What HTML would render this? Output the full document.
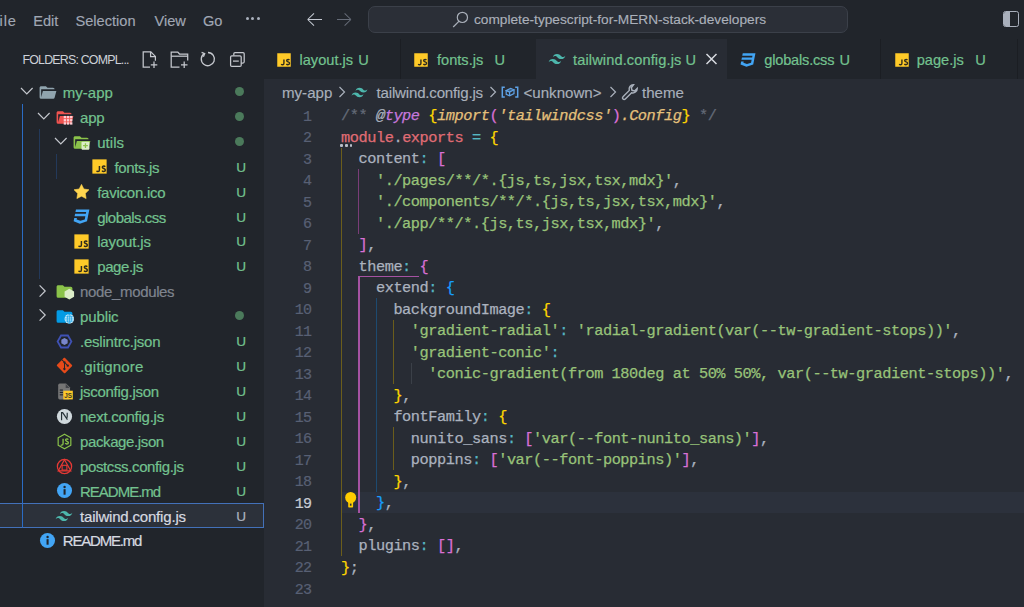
<!DOCTYPE html><html><head><meta charset="utf-8"><style>
*{margin:0;padding:0;box-sizing:border-box}
html,body{width:1024px;height:607px;overflow:hidden;background:#282c34}
body{position:relative;font-family:"Liberation Sans",sans-serif;color:#abb2bf}
.a{position:absolute;white-space:nowrap}
.menu{top:2px;height:39px;line-height:39px;font-size:14.6px;color:#a0a7b4;-webkit-text-stroke:0.15px currentColor}
.tr{-webkit-text-stroke:0.2px currentColor;font-size:15px;color:#81b88b;line-height:25px;height:25px}
.code{font-family:"Liberation Mono",monospace;font-size:15.3px;letter-spacing:-0.45px;-webkit-text-stroke:0.25px currentColor;line-height:21.5px;height:21.5px;color:#abb2bf;white-space:pre}
.ln{font-family:"Liberation Mono",monospace;font-size:15px;letter-spacing:-0.6px;-webkit-text-stroke:0.2px currentColor;line-height:21.5px;color:#495162;text-align:right;width:40px}
.tab{-webkit-text-stroke:0.2px currentColor;font-size:14.6px;line-height:40px;height:40px;color:#81b88b}
svg{position:absolute;overflow:visible}
</style></head><body>
<div class="a" style="left:0;top:0;width:1024px;height:39px;background:#21252b"></div>
<div class="a" style="left:0;top:39px;width:264px;height:568px;background:#21252b"></div>
<div class="a" style="left:264px;top:39px;width:760px;height:40px;background:#21252b"></div>
<div class="a" style="left:264px;top:79px;width:760px;height:528px;background:#282c34"></div>
<div class="a menu" style="left:-10.3px;letter-spacing:0.9px">File</div>
<div class="a menu" style="left:33.2px;letter-spacing:0px">Edit</div>
<div class="a menu" style="left:75.5px;letter-spacing:0px">Selection</div>
<div class="a menu" style="left:154.5px;letter-spacing:0px">View</div>
<div class="a menu" style="left:203px;letter-spacing:0px">Go</div>
<div class="a" style="left:245.5px;top:17.4px;width:3px;height:3px;border-radius:50%;background:#aab1bd"></div>
<div class="a" style="left:251.17px;top:17.4px;width:3px;height:3px;border-radius:50%;background:#aab1bd"></div>
<div class="a" style="left:256.84px;top:17.4px;width:3px;height:3px;border-radius:50%;background:#aab1bd"></div>
<svg style="left:305px;top:11px" width="18" height="18" viewBox="0 0 18 18"><path d="M2.7 8.5H17M2.7 8.5L9 2.3M2.7 8.5L9 14.7" stroke="#c5cad3" stroke-width="1.05" fill="none"/></svg>
<svg style="left:335px;top:11px" width="18" height="18" viewBox="0 0 18 18"><path d="M15.9 8.5H2M15.9 8.5L9.6 2.3M15.9 8.5L9.6 14.7" stroke="#666c78" stroke-width="1.05" fill="none"/></svg>
<div class="a" style="left:368px;top:6px;width:480px;height:26.5px;border-radius:7px;background:#2b2f37;border:1px solid #3b4049"></div>
<svg style="left:452px;top:10px" width="18" height="18" viewBox="0 0 18 18"><circle cx="10.4" cy="7.4" r="5.1" stroke="#a9afb9" stroke-width="1.2" fill="none"/><path d="M7.1 11.1L1.2 17" stroke="#a9afb9" stroke-width="1.25"/></svg>
<div class="a" style="left:474px;top:6.8px;line-height:26px;font-size:13.7px;color:#aab0ba;-webkit-text-stroke:0.15px currentColor">complete-typescript-for-MERN-stack-developers</div>
<div class="a" style="left:1003.2px;top:10.9px;width:16px;height:16px;border:1.5px solid #a9b0bc;border-radius:2.5px;overflow:hidden"><div class="a" style="left:0;top:0;width:6px;height:14px;background:#a9b0bc"></div></div>
<div class="a" style="left:22.5px;top:49.2px;font-size:12.4px;line-height:22px;color:#cdd1d8;letter-spacing:-0.8px">FOLDERS: COMPL...</div>
<svg style="left:141px;top:50px" width="19" height="19" viewBox="0 0 19 19" fill="none" stroke="#c5c8ce" stroke-width="1.25"><path d="M9 17.2H2.2V1.8h7.6l4.6 4.6v4.4"/><path d="M9.6 1.8v4.8h4.8"/><path d="M13 11.5v6.5M9.8 14.75h6.5"/></svg>
<svg style="left:170px;top:50px" width="20" height="19" viewBox="0 0 20 19" fill="none" stroke="#c5c8ce" stroke-width="1.25"><path d="M9.5 17.2H1.2V2h6.6l1.7 2h8.2v6.5"/><path d="M1.2 6.2h16.5"/><path d="M14.2 11.5v6.5M11 14.75h6.5"/></svg>
<svg style="left:199px;top:50px" width="18" height="18" viewBox="0 0 18 18" fill="none" stroke="#c5c8ce" stroke-width="1.3"><path d="M5.2 3.6A6.6 6.6 0 1 0 9 2.5"/><path d="M2.6 2.3l3.1 1.4-1.3 3.1"/></svg>
<svg style="left:229px;top:51px" width="17" height="17" viewBox="0 0 17 17" fill="none" stroke="#c5c8ce" stroke-width="1.25"><path d="M4.8 4.6V2.8c0-.7.5-1.2 1.2-1.2h8c.7 0 1.2.5 1.2 1.2v8c0 .7-.5 1.2-1.2 1.2h-1.8"/><rect x="1.6" y="4.8" width="10.6" height="10.6" rx="1.2"/><path d="M4 10.1h5.8"/></svg>
<div class="a" style="left:-1px;top:502.74000000000007px;width:265px;height:25px;background:#2c313a;border:1px solid #4371b9"></div>
<div class="a" style="left:22px;top:104.42px;width:1px;height:423.64000000000004px;background:#2b6cc4"></div>
<div class="a" style="left:39px;top:129.34px;width:1px;height:149.52px;background:#23395a"></div>
<div class="a" style="left:56px;top:154.26px;width:1px;height:24.92px;background:#23395a"></div>
<svg style="left:19.5px;top:78.2px" width="14" height="25" viewBox="0 0 14 25"><path d="M1 10l5.8 5.8L12.6 10" stroke="#c5c8ce" stroke-width="1.2" fill="none"/></svg>
<svg style="left:37.6px;top:82.7px" width="19" height="19" viewBox="0 0 24 24"><path fill="#90a4ae" d="M19 20H4a2 2 0 0 1-2-2V6c0-1.11.89-2 2-2h6l2 2h7a2 2 0 0 1 2 2H4v10l2.14-8h17.07l-2.28 8.5c-.23.87-1.01 1.5-1.93 1.5"/></svg>
<div class="a tr" style="left:62.8px;top:79.9px;letter-spacing:0.000px;color:#73c28f">my-app</div>
<div class="a" style="left:235px;top:86.8px;width:9px;height:9px;border-radius:50%;background:#4b7a5b"></div>
<svg style="left:36.8px;top:103.12px" width="14" height="25" viewBox="0 0 14 25"><path d="M1 10l5.8 5.8L12.6 10" stroke="#c5c8ce" stroke-width="1.2" fill="none"/></svg>
<svg style="left:54.900000000000006px;top:107.62px" width="19" height="19" viewBox="0 0 24 24"><path fill="#ef5350" d="M19 20H4a2 2 0 0 1-2-2V6c0-1.11.89-2 2-2h6l2 2h7a2 2 0 0 1 2 2H4v10l2.14-8h17.07l-2.28 8.5c-.23.87-1.01 1.5-1.93 1.5"/><g fill="#ffcdd2"><rect x="11" y="10" width="3" height="3"/><rect x="15" y="10" width="3" height="3"/><rect x="19" y="10" width="3" height="3"/><rect x="11" y="14" width="3" height="3"/><rect x="15" y="14" width="3" height="3"/><rect x="19" y="14" width="3" height="3"/><rect x="11" y="18" width="3" height="3"/><rect x="15" y="18" width="3" height="3"/><rect x="19" y="18" width="3" height="3"/></g></svg>
<div class="a tr" style="left:80.0px;top:104.82000000000001px;letter-spacing:-0.200px;color:#73c28f">app</div>
<div class="a" style="left:235px;top:111.72px;width:9px;height:9px;border-radius:50%;background:#4b7a5b"></div>
<svg style="left:54.1px;top:128.04px" width="14" height="25" viewBox="0 0 14 25"><path d="M1 10l5.8 5.8L12.6 10" stroke="#c5c8ce" stroke-width="1.2" fill="none"/></svg>
<svg style="left:72.2px;top:132.54px" width="19" height="19" viewBox="0 0 24 24"><path fill="#8bc34a" d="M19 20H4a2 2 0 0 1-2-2V6c0-1.11.89-2 2-2h6l2 2h7a2 2 0 0 1 2 2H4v10l2.14-8h17.07l-2.28 8.5c-.23.87-1.01 1.5-1.93 1.5"/><rect x="12" y="11" width="10" height="10" rx="1" fill="#dcedc8"/><path d="M17 13v6M14 16h6" stroke="#8bc34a" stroke-width="1.6"/></svg>
<div class="a tr" style="left:97.19999999999999px;top:129.74px;letter-spacing:0.050px;color:#73c28f">utils</div>
<div class="a" style="left:235px;top:136.64000000000001px;width:9px;height:9px;border-radius:50%;background:#4b7a5b"></div>
<svg style="left:89.5px;top:157.45999999999998px" width="19" height="19" viewBox="0 0 24 24"><rect x="3" y="3" width="18" height="18" fill="#ffca28"/><path d="M11.9 11.3v5c0 1.4-.7 2.1-1.8 2.1-.8 0-1.4-.4-1.7-1.1" stroke="#2e2b1f" stroke-width="1.85" fill="none"/><path d="M19.2 12.3c-.4-.6-1-.9-1.8-.9-1 0-1.8.6-1.8 1.5 0 2 3.8 1.3 3.8 3.5 0 1.1-.9 1.9-2.1 1.9-.9 0-1.7-.4-2.1-1.1" stroke="#2e2b1f" stroke-width="1.85" fill="none"/></svg>
<div class="a tr" style="left:114.39999999999999px;top:154.66px;letter-spacing:-0.343px;color:#73c28f">fonts.js</div>
<div class="a" style="left:236.3px;top:154.66px;line-height:25px;font-size:13.6px;-webkit-text-stroke:0.2px currentColor;color:#73c28f">U</div>
<svg style="left:72.2px;top:182.38px" width="19" height="19" viewBox="0 0 24 24"><path fill="#ffd54f" stroke="#ffd54f" stroke-width="0.8" stroke-linejoin="round" d="M12.00 3.00 L14.94 8.85 L21.42 9.84 L16.76 14.45 L17.82 20.91 L12.00 17.90 L6.18 20.91 L7.24 14.45 L2.58 9.84 L9.06 8.85z"/></svg>
<div class="a tr" style="left:97.19999999999999px;top:179.58px;letter-spacing:-0.240px;color:#73c28f">favicon.ico</div>
<div class="a" style="left:236.3px;top:179.58px;line-height:25px;font-size:13.6px;-webkit-text-stroke:0.2px currentColor;color:#73c28f">U</div>
<svg style="left:72.2px;top:207.3px" width="19" height="19" viewBox="0 0 24 24"><path fill="#42a5f5" d="m5 3-.65 3.34h13.59L17.5 8.5H3.92l-.66 3.33h13.59l-.76 3.81-5.48 1.81-4.75-1.81.33-1.64H2.85l-.79 4 7.85 3 9.05-3 1.2-6.03.24-1.21L21.94 3z"/></svg>
<div class="a tr" style="left:97.19999999999999px;top:204.50000000000003px;letter-spacing:-0.520px;color:#73c28f">globals.css</div>
<div class="a" style="left:236.3px;top:204.50000000000003px;line-height:25px;font-size:13.6px;-webkit-text-stroke:0.2px currentColor;color:#73c28f">U</div>
<svg style="left:72.2px;top:232.22px" width="19" height="19" viewBox="0 0 24 24"><rect x="3" y="3" width="18" height="18" fill="#ffca28"/><path d="M11.9 11.3v5c0 1.4-.7 2.1-1.8 2.1-.8 0-1.4-.4-1.7-1.1" stroke="#2e2b1f" stroke-width="1.85" fill="none"/><path d="M19.2 12.3c-.4-.6-1-.9-1.8-.9-1 0-1.8.6-1.8 1.5 0 2 3.8 1.3 3.8 3.5 0 1.1-.9 1.9-2.1 1.9-.9 0-1.7-.4-2.1-1.1" stroke="#2e2b1f" stroke-width="1.85" fill="none"/></svg>
<div class="a tr" style="left:97.19999999999999px;top:229.42000000000002px;letter-spacing:-0.150px;color:#73c28f">layout.js</div>
<div class="a" style="left:236.3px;top:229.42000000000002px;line-height:25px;font-size:13.6px;-webkit-text-stroke:0.2px currentColor;color:#73c28f">U</div>
<svg style="left:72.2px;top:257.14px" width="19" height="19" viewBox="0 0 24 24"><rect x="3" y="3" width="18" height="18" fill="#ffca28"/><path d="M11.9 11.3v5c0 1.4-.7 2.1-1.8 2.1-.8 0-1.4-.4-1.7-1.1" stroke="#2e2b1f" stroke-width="1.85" fill="none"/><path d="M19.2 12.3c-.4-.6-1-.9-1.8-.9-1 0-1.8.6-1.8 1.5 0 2 3.8 1.3 3.8 3.5 0 1.1-.9 1.9-2.1 1.9-.9 0-1.7-.4-2.1-1.1" stroke="#2e2b1f" stroke-width="1.85" fill="none"/></svg>
<div class="a tr" style="left:97.19999999999999px;top:254.34px;letter-spacing:-0.400px;color:#73c28f">page.js</div>
<div class="a" style="left:236.3px;top:254.34px;line-height:25px;font-size:13.6px;-webkit-text-stroke:0.2px currentColor;color:#73c28f">U</div>
<svg style="left:36.8px;top:277.56px" width="14" height="25" viewBox="0 0 14 25"><path d="M2.6 7.4l5.6 5.6L2.6 18.6" stroke="#c5c8ce" stroke-width="1.2" fill="none"/></svg>
<svg style="left:54.900000000000006px;top:282.06px" width="19" height="19" viewBox="0 0 24 24"><path fill="#8bc34a" d="M10 4H4c-1.11 0-2 .89-2 2v12a2 2 0 0 0 2 2h16a2 2 0 0 0 2-2V8a2 2 0 0 0-2-2h-8z"/><path fill="#dcedc8" d="M18.1 8.5l6 3.4v6.8l-6 3.4-6-3.4v-6.8z"/></svg>
<div class="a tr" style="left:80.0px;top:279.26px;letter-spacing:-0.345px;color:#7f848e">node_modules</div>
<svg style="left:36.8px;top:302.48px" width="14" height="25" viewBox="0 0 14 25"><path d="M2.6 7.4l5.6 5.6L2.6 18.6" stroke="#c5c8ce" stroke-width="1.2" fill="none"/></svg>
<svg style="left:54.900000000000006px;top:306.98px" width="19" height="19" viewBox="0 0 24 24"><path fill="#039be5" d="M10 4H4c-1.11 0-2 .89-2 2v12a2 2 0 0 0 2 2h16a2 2 0 0 0 2-2V8a2 2 0 0 0-2-2h-8z"/><circle cx="18.1" cy="15.1" r="6" fill="#e1f5fe"/><g stroke="#039be5" stroke-width="0.9" fill="none"><path d="M12.4 15.1h11.4M18.1 9.3v11.6M13 12.4h10.2M13 17.8h10.2"/><ellipse cx="18.1" cy="15.1" rx="2.6" ry="5.6"/></g></svg>
<div class="a tr" style="left:80.0px;top:304.18px;letter-spacing:-0.120px;color:#73c28f">public</div>
<div class="a" style="left:235px;top:311.08000000000004px;width:9px;height:9px;border-radius:50%;background:#4b7a5b"></div>
<svg style="left:54.900000000000006px;top:331.90000000000003px" width="19" height="19" viewBox="0 0 24 24"><path fill="#3f51b5" d="M7 3.2h10l5 8.8-5 8.8H7L2 12z"/><path fill="#21252b" d="M8.3 5.6h7.4l3.7 6.4-3.7 6.4H8.3L4.6 12z"/><path fill="#7986cb" d="M12 7.6l4 2.2v4.4l-4 2.2-4-2.2V9.8z"/></svg>
<div class="a tr" style="left:80.0px;top:329.1px;letter-spacing:-0.215px;color:#73c28f">.eslintrc.json</div>
<div class="a" style="left:236.3px;top:329.1px;line-height:25px;font-size:13.6px;-webkit-text-stroke:0.2px currentColor;color:#73c28f">U</div>
<svg style="left:54.900000000000006px;top:356.02px" width="19" height="19" viewBox="0 0 24 24"><path fill="#e64a19" d="M2.6 12.7l8.7 8.7c.5.5 1.2.5 1.7 0l8.4-8.4c.5-.5.5-1.2 0-1.7L12.7 2.6c-.5-.5-1.2-.5-1.7 0L9.2 4.4l2.3 2.3a1.5 1.5 0 0 1 1.9 1.9l2.2 2.2a1.5 1.5 0 1 1-.9.9l-2.1-2.1v5.4a1.5 1.5 0 1 1-1.2-.1V9.4a1.5 1.5 0 0 1-.8-2L8.3 5.3 2.6 11c-.5.5-.5 1.2 0 1.7z"/></svg>
<div class="a tr" style="left:80.0px;top:354.02px;letter-spacing:0.178px;color:#73c28f">.gitignore</div>
<div class="a" style="left:236.3px;top:354.02px;line-height:25px;font-size:13.6px;-webkit-text-stroke:0.2px currentColor;color:#73c28f">U</div>
<svg style="left:54.900000000000006px;top:381.74px" width="19" height="19" viewBox="0 0 24 24"><path fill="#757575" d="M6 2h8l5 5v13a2 2 0 0 1-2 2H6a2 2 0 0 1-2-2V4a2 2 0 0 1 2-2z"/><path fill="#21252b" d="M13.5 2.5v5h5z" opacity=".6"/><rect x="6" y="9.5" width="4" height="1.4" fill="#21252b"/><rect x="6" y="12.5" width="4" height="1.4" fill="#21252b"/><rect x="6" y="15.5" width="4" height="1.4" fill="#21252b"/><rect x="10.5" y="11" width="12" height="11" fill="#ffca28"/><text x="16.5" y="20.3" font-family="Liberation Sans" font-weight="bold" font-size="8" text-anchor="middle" fill="#3e3a27">JS</text></svg>
<div class="a tr" style="left:80.0px;top:378.94px;letter-spacing:-0.283px;color:#73c28f">jsconfig.json</div>
<div class="a" style="left:236.3px;top:378.94px;line-height:25px;font-size:13.6px;-webkit-text-stroke:0.2px currentColor;color:#73c28f">U</div>
<svg style="left:54.900000000000006px;top:406.66px" width="19" height="19" viewBox="0 0 24 24"><circle cx="12" cy="12" r="9.6" fill="#cfd8dc"/><path d="M8.3 16.8V7.2h1.4l6 8.8M15.4 7.2v6.3" stroke="#263238" stroke-width="1.5" fill="none"/></svg>
<div class="a tr" style="left:80.0px;top:403.86px;letter-spacing:-0.262px;color:#73c28f">next.config.js</div>
<div class="a" style="left:236.3px;top:403.86px;line-height:25px;font-size:13.6px;-webkit-text-stroke:0.2px currentColor;color:#73c28f">U</div>
<svg style="left:54.900000000000006px;top:431.58px" width="19" height="19" viewBox="0 0 24 24"><path d="M12 2.8l8 4.6v9.2L12 21.2l-8-4.6V7.4z" stroke="#8bc34a" stroke-width="1.5" stroke-linejoin="round" fill="none"/><path d="M10.2 8.6v6c0 1.3-.7 2-1.7 2-.5 0-.9-.2-1.2-.5" stroke="#8bc34a" stroke-width="1.7" fill="none"/><path d="M16.8 9.6c-.4-.6-1-.9-1.8-.9-1 0-1.7.6-1.7 1.4 0 2 3.6 1.3 3.6 3.4 0 1-.8 1.7-2 1.7-.9 0-1.6-.4-2-1" stroke="#8bc34a" stroke-width="1.7" fill="none"/></svg>
<div class="a tr" style="left:80.0px;top:428.78px;letter-spacing:-0.382px;color:#73c28f">package.json</div>
<div class="a" style="left:236.3px;top:428.78px;line-height:25px;font-size:13.6px;-webkit-text-stroke:0.2px currentColor;color:#73c28f">U</div>
<svg style="left:54.900000000000006px;top:456.5px" width="19" height="19" viewBox="0 0 24 24"><circle cx="12" cy="12" r="9" stroke="#e53935" stroke-width="1.6" fill="none"/><path d="M12 3.5L20 17.5H4z" stroke="#e53935" stroke-width="1.5" fill="none"/><rect x="9" y="10.5" width="6" height="6" stroke="#e53935" stroke-width="1.4" fill="none"/></svg>
<div class="a tr" style="left:80.0px;top:453.7px;letter-spacing:-0.375px;color:#73c28f">postcss.config.js</div>
<div class="a" style="left:236.3px;top:453.7px;line-height:25px;font-size:13.6px;-webkit-text-stroke:0.2px currentColor;color:#73c28f">U</div>
<svg style="left:54.900000000000006px;top:481.42px" width="19" height="19" viewBox="0 0 24 24"><circle cx="12" cy="12" r="9.5" fill="#42a5f5"/><rect x="10.8" y="10.3" width="2.6" height="7" fill="#21252b"/><circle cx="12.1" cy="7.6" r="1.5" fill="#21252b"/></svg>
<div class="a tr" style="left:80.0px;top:478.62px;letter-spacing:-1.000px;color:#73c28f">README.md</div>
<div class="a" style="left:236.3px;top:478.62px;line-height:25px;font-size:13.6px;-webkit-text-stroke:0.2px currentColor;color:#73c28f">U</div>
<svg style="left:54.400000000000006px;top:506.04px" width="20" height="20" viewBox="0 0 24 24"><path fill="#4db6ac" d="M12 6c-2.67 0-4.33 1.33-5 4 1-1.33 2.17-1.83 3.5-1.5.76.19 1.31.74 1.91 1.35.98 1 2.12 2.15 4.59 2.15 2.67 0 4.33-1.33 5-4-1 1.33-2.17 1.83-3.5 1.5-.76-.19-1.3-.74-1.91-1.35C15.61 7.15 14.47 6 12 6m-5 6c-2.67 0-4.33 1.33-5 4 1-1.33 2.17-1.83 3.5-1.5.76.19 1.3.74 1.91 1.35C8.39 16.85 9.53 18 12 18c2.67 0 4.33-1.33 5-4-1 1.33-2.17 1.83-3.5 1.5-.76-.19-1.3-.74-1.91-1.35C10.61 13.15 9.47 12 7 12z"/></svg>
<div class="a tr" style="left:80.0px;top:503.54px;letter-spacing:-0.188px;color:#d7dae0">tailwind.config.js</div>
<div class="a" style="left:236.3px;top:503.54px;line-height:25px;font-size:13.6px;-webkit-text-stroke:0.2px currentColor;color:#abb2bf">U</div>
<svg style="left:37.6px;top:531.2600000000001px" width="19" height="19" viewBox="0 0 24 24"><circle cx="12" cy="12" r="9.5" fill="#42a5f5"/><rect x="10.8" y="10.3" width="2.6" height="7" fill="#21252b"/><circle cx="12.1" cy="7.6" r="1.5" fill="#21252b"/></svg>
<div class="a tr" style="left:62.8px;top:528.46px;letter-spacing:-1.200px;color:#d7dae0">README.md</div>
<div class="a" style="left:536px;top:39px;width:191px;height:40px;background:#282c34"></div>
<div class="a" style="left:400px;top:39px;width:1px;height:40px;background:#1b1e23"></div>
<div class="a" style="left:880px;top:39px;width:1px;height:40px;background:#1b1e23"></div>
<div class="a" style="left:1017px;top:39px;width:1px;height:40px;background:#1b1e23"></div>
<svg style="left:275.2px;top:50.5px" width="18" height="18" viewBox="0 0 24 24"><rect x="3" y="3" width="18" height="18" fill="#ffca28"/><path d="M11.9 11.3v5c0 1.4-.7 2.1-1.8 2.1-.8 0-1.4-.4-1.7-1.1" stroke="#2e2b1f" stroke-width="1.85" fill="none"/><path d="M19.2 12.3c-.4-.6-1-.9-1.8-.9-1 0-1.8.6-1.8 1.5 0 2 3.8 1.3 3.8 3.5 0 1.1-.9 1.9-2.1 1.9-.9 0-1.7-.4-2.1-1.1" stroke="#2e2b1f" stroke-width="1.85" fill="none"/></svg>
<div class="a tab" style="left:299.5px;top:40px;font-size:14.6px;letter-spacing:0px;color:#73c28f">layout.js</div>
<div class="a tab" style="left:358.2px;top:40px;font-size:14.6px;letter-spacing:0px;color:#73c28f">U</div>
<svg style="left:412px;top:50.5px" width="18" height="18" viewBox="0 0 24 24"><rect x="3" y="3" width="18" height="18" fill="#ffca28"/><path d="M11.9 11.3v5c0 1.4-.7 2.1-1.8 2.1-.8 0-1.4-.4-1.7-1.1" stroke="#2e2b1f" stroke-width="1.85" fill="none"/><path d="M19.2 12.3c-.4-.6-1-.9-1.8-.9-1 0-1.8.6-1.8 1.5 0 2 3.8 1.3 3.8 3.5 0 1.1-.9 1.9-2.1 1.9-.9 0-1.7-.4-2.1-1.1" stroke="#2e2b1f" stroke-width="1.85" fill="none"/></svg>
<div class="a tab" style="left:437px;top:40px;font-size:14.6px;letter-spacing:0px;color:#73c28f">fonts.js</div>
<div class="a tab" style="left:494.5px;top:40px;font-size:14.6px;letter-spacing:0px;color:#73c28f">U</div>
<svg style="left:547.2px;top:48.9px" width="20" height="20" viewBox="0 0 24 24"><path fill="#4db6ac" d="M12 6c-2.67 0-4.33 1.33-5 4 1-1.33 2.17-1.83 3.5-1.5.76.19 1.31.74 1.91 1.35.98 1 2.12 2.15 4.59 2.15 2.67 0 4.33-1.33 5-4-1 1.33-2.17 1.83-3.5 1.5-.76-.19-1.3-.74-1.91-1.35C15.61 7.15 14.47 6 12 6m-5 6c-2.67 0-4.33 1.33-5 4 1-1.33 2.17-1.83 3.5-1.5.76.19 1.3.74 1.91 1.35C8.39 16.85 9.53 18 12 18c2.67 0 4.33-1.33 5-4-1 1.33-2.17 1.83-3.5 1.5-.76-.19-1.3-.74-1.91-1.35C10.61 13.15 9.47 12 7 12z"/></svg>
<div class="a tab" style="left:573px;top:40px;font-size:14.6px;letter-spacing:0.12px;color:#73c28f">tailwind.config.js</div>
<div class="a tab" style="left:685.5px;top:40px;font-size:14.6px;letter-spacing:0px;color:#73c28f">U</div>
<svg style="left:705px;top:53px" width="13" height="12" viewBox="0 0 13 12"><path d="M1.5 1L11.5 11M11.5 1L1.5 11" stroke="#d7dae0" stroke-width="1.5"/></svg>
<svg style="left:738.5px;top:50.5px" width="18" height="18" viewBox="0 0 24 24"><path fill="#42a5f5" d="m5 3-.65 3.34h13.59L17.5 8.5H3.92l-.66 3.33h13.59l-.76 3.81-5.48 1.81-4.75-1.81.33-1.64H2.85l-.79 4 7.85 3 9.05-3 1.2-6.03.24-1.21L21.94 3z"/></svg>
<div class="a tab" style="left:764.3px;top:40px;font-size:14.6px;letter-spacing:-0.2px;color:#73c28f">globals.css</div>
<div class="a tab" style="left:839.5px;top:40px;font-size:14.6px;letter-spacing:0px;color:#73c28f">U</div>
<svg style="left:893px;top:50.5px" width="18" height="18" viewBox="0 0 24 24"><rect x="3" y="3" width="18" height="18" fill="#ffca28"/><path d="M11.9 11.3v5c0 1.4-.7 2.1-1.8 2.1-.8 0-1.4-.4-1.7-1.1" stroke="#2e2b1f" stroke-width="1.85" fill="none"/><path d="M19.2 12.3c-.4-.6-1-.9-1.8-.9-1 0-1.8.6-1.8 1.5 0 2 3.8 1.3 3.8 3.5 0 1.1-.9 1.9-2.1 1.9-.9 0-1.7-.4-2.1-1.1" stroke="#2e2b1f" stroke-width="1.85" fill="none"/></svg>
<div class="a tab" style="left:916.7px;top:40px;font-size:14.6px;letter-spacing:0px;color:#73c28f">page.js</div>
<div class="a tab" style="left:975.3px;top:40px;font-size:14.6px;letter-spacing:0px;color:#73c28f">U</div>
<div class="a" style="left:282px;top:80px;line-height:26px;font-size:15.1px;-webkit-text-stroke:0.15px currentColor;letter-spacing:0px;color:#a9b0bb">my-app</div>
<svg style="left:337.5px;top:85px" width="9" height="14" viewBox="0 0 9 14"><path d="M1.5 2l5 5-5 5" stroke="#a9b0bb" stroke-width="1.2" fill="none"/></svg>
<svg style="left:350px;top:83px" width="19" height="19" viewBox="0 0 24 24"><path fill="#4db6ac" d="M12 6c-2.67 0-4.33 1.33-5 4 1-1.33 2.17-1.83 3.5-1.5.76.19 1.31.74 1.91 1.35.98 1 2.12 2.15 4.59 2.15 2.67 0 4.33-1.33 5-4-1 1.33-2.17 1.83-3.5 1.5-.76-.19-1.3-.74-1.91-1.35C15.61 7.15 14.47 6 12 6m-5 6c-2.67 0-4.33 1.33-5 4 1-1.33 2.17-1.83 3.5-1.5.76.19 1.3.74 1.91 1.35C8.39 16.85 9.53 18 12 18c2.67 0 4.33-1.33 5-4-1 1.33-2.17 1.83-3.5 1.5-.76-.19-1.3-.74-1.91-1.35C10.61 13.15 9.47 12 7 12z"/></svg>
<div class="a" style="left:376.6px;top:80px;line-height:26px;font-size:15.1px;-webkit-text-stroke:0.15px currentColor;letter-spacing:-0.2px;color:#a9b0bb">tailwind.config.js</div>
<svg style="left:488.5px;top:85px" width="9" height="14" viewBox="0 0 9 14"><path d="M1.5 2l5 5-5 5" stroke="#a9b0bb" stroke-width="1.2" fill="none"/></svg>
<svg style="left:501px;top:85px" width="18" height="14" viewBox="0 0 18 14" fill="none" stroke="#5ea2e6" stroke-width="1.5"><path d="M3.8 2.2H1.3v9.8h2.5M14.2 2.2h2.5v9.8h-2.5"/><path d="M5.2 5.6L9.6 3.3l3.4 1.5-4.4 2.3z" fill="#5ea2e6" fill-opacity=".45" stroke-width="1.2"/><path d="M5.2 5.6v3.7l3.4 1.6 4.4-2.3V4.8M8.6 7.1v3.8" stroke-width="1.2"/></svg>
<div class="a" style="left:523.5px;top:80px;line-height:26px;font-size:15.1px;-webkit-text-stroke:0.15px currentColor;letter-spacing:0px;color:#a9b0bb">&lt;unknown&gt;</div>
<svg style="left:609px;top:85px" width="9" height="14" viewBox="0 0 9 14"><path d="M1.5 2l5 5-5 5" stroke="#a9b0bb" stroke-width="1.2" fill="none"/></svg>
<svg style="left:621px;top:83px" width="19" height="19" viewBox="0 0 19 19" fill="none" stroke="#a9b0bb" stroke-width="1.45"><path d="M12.5 1.8a4.3 4.3 0 0 0-4.2 5.6L2 13.7a1.6 1.6 0 0 0 2.3 2.3l6.3-6.3a4.3 4.3 0 0 0 5.6-4.2l-2.6 2.5-2.6-.7-.7-2.6z"/></svg>
<div class="a" style="left:642px;top:80px;line-height:26px;font-size:15.1px;-webkit-text-stroke:0.15px currentColor;letter-spacing:0px;color:#a9b0bb">theme</div>
<div class="a" style="left:341px;top:491.7px;width:683px;height:21.5px;background:#2c313c"></div>
<div class="a" style="left:341.0px;top:147.7px;width:1px;height:408.5px;background:#6b5d1b"></div>
<div class="a" style="left:358.46px;top:169.2px;width:1px;height:64.5px;background:#7a3d78"></div>
<div class="a" style="left:358.46px;top:276.7px;width:2px;height:236.5px;background:#a552a2"></div>
<div class="a" style="left:358.46px;top:276.09999999999997px;width:60.54000000000002px;height:1.3px;background:#a552a2"></div>
<div class="a" style="left:375.92px;top:298.2px;width:1px;height:193.5px;background:#1d4a70"></div>
<div class="a" style="left:393.38px;top:319.7px;width:1px;height:64.5px;background:#6b5d1b"></div>
<div class="a" style="left:393.38px;top:427.2px;width:1px;height:43.0px;background:#6b5d1b"></div>
<div class="a" style="left:410.84000000000003px;top:362.7px;width:1px;height:21.5px;background:#3b4048"></div>
<div class="a ln" style="left:271.5px;top:106.5px;color:#586074">1</div>
<div class="a code" style="left:341.0px;top:106.4px"><span style="color:#636a77">/** </span><span style="color:#abb2bf;font-style:italic">@</span><span style="color:#c678dd;font-style:italic">type</span><span style="color:#abb2bf"> </span><span style="color:#ffd700">{</span><span style="color:#e5c07b;font-style:italic">import</span><span style="color:#da70d6">(</span><span style="color:#e5c07b;font-style:italic">&#x27;tailwindcss&#x27;</span><span style="color:#da70d6">)</span><span style="color:#e5c07b;font-style:italic">.Config</span><span style="color:#ffd700">}</span><span style="color:#636a77"> */</span></div>
<div class="a ln" style="left:271.5px;top:128.0px;color:#586074">2</div>
<div class="a code" style="left:341.0px;top:127.9px"><span style="color:#e06c75">module</span><span style="color:#abb2bf">.</span><span style="color:#e06c75">exports</span><span style="color:#abb2bf"> </span><span style="color:#56b6c2">=</span><span style="color:#abb2bf"> </span><span style="color:#ffd700">{</span></div>
<div class="a ln" style="left:271.5px;top:149.5px;color:#586074">3</div>
<div class="a code" style="left:341.0px;top:149.39999999999998px"><span style="color:#abb2bf">  content</span><span style="color:#56b6c2">:</span><span style="color:#abb2bf"> </span><span style="color:#da70d6">[</span></div>
<div class="a ln" style="left:271.5px;top:171.0px;color:#586074">4</div>
<div class="a code" style="left:341.0px;top:170.89999999999998px"><span style="color:#98c379">    &#x27;./pages/**/*.{js,ts,jsx,tsx,mdx}&#x27;</span><span style="color:#abb2bf">,</span></div>
<div class="a ln" style="left:271.5px;top:192.5px;color:#586074">5</div>
<div class="a code" style="left:341.0px;top:192.39999999999998px"><span style="color:#98c379">    &#x27;./components/**/*.{js,ts,jsx,tsx,mdx}&#x27;</span><span style="color:#abb2bf">,</span></div>
<div class="a ln" style="left:271.5px;top:214.0px;color:#586074">6</div>
<div class="a code" style="left:341.0px;top:213.89999999999998px"><span style="color:#98c379">    &#x27;./app/**/*.{js,ts,jsx,tsx,mdx}&#x27;</span><span style="color:#abb2bf">,</span></div>
<div class="a ln" style="left:271.5px;top:235.5px;color:#586074">7</div>
<div class="a code" style="left:341.0px;top:235.39999999999998px"><span style="color:#abb2bf">  </span><span style="color:#da70d6">]</span><span style="color:#abb2bf">,</span></div>
<div class="a ln" style="left:271.5px;top:257.0px;color:#586074">8</div>
<div class="a code" style="left:341.0px;top:256.9px"><span style="color:#abb2bf">  theme</span><span style="color:#56b6c2">:</span><span style="color:#abb2bf"> </span><span style="color:#da70d6">{</span></div>
<div class="a ln" style="left:271.5px;top:278.5px;color:#586074">9</div>
<div class="a code" style="left:341.0px;top:278.4px"><span style="color:#abb2bf">    extend</span><span style="color:#56b6c2">:</span><span style="color:#abb2bf"> </span><span style="color:#179fff">{</span></div>
<div class="a ln" style="left:271.5px;top:300.0px;color:#586074">10</div>
<div class="a code" style="left:341.0px;top:299.9px"><span style="color:#abb2bf">      backgroundImage</span><span style="color:#56b6c2">:</span><span style="color:#abb2bf"> </span><span style="color:#ffd700">{</span></div>
<div class="a ln" style="left:271.5px;top:321.5px;color:#586074">11</div>
<div class="a code" style="left:341.0px;top:321.4px"><span style="color:#98c379">        &#x27;gradient-radial&#x27;</span><span style="color:#56b6c2">:</span><span style="color:#98c379"> &#x27;radial-gradient(var(--tw-gradient-stops))&#x27;</span><span style="color:#abb2bf">,</span></div>
<div class="a ln" style="left:271.5px;top:343.0px;color:#586074">12</div>
<div class="a code" style="left:341.0px;top:342.9px"><span style="color:#98c379">        &#x27;gradient-conic&#x27;</span><span style="color:#56b6c2">:</span></div>
<div class="a ln" style="left:271.5px;top:364.5px;color:#586074">13</div>
<div class="a code" style="left:341.0px;top:364.4px"><span style="color:#98c379">          &#x27;conic-gradient(from 180deg at 50% 50%, var(--tw-gradient-stops))&#x27;</span><span style="color:#abb2bf">,</span></div>
<div class="a ln" style="left:271.5px;top:386.0px;color:#586074">14</div>
<div class="a code" style="left:341.0px;top:385.9px"><span style="color:#abb2bf">      </span><span style="color:#ffd700">}</span><span style="color:#abb2bf">,</span></div>
<div class="a ln" style="left:271.5px;top:407.5px;color:#586074">15</div>
<div class="a code" style="left:341.0px;top:407.4px"><span style="color:#abb2bf">      fontFamily</span><span style="color:#56b6c2">:</span><span style="color:#abb2bf"> </span><span style="color:#ffd700">{</span></div>
<div class="a ln" style="left:271.5px;top:429.0px;color:#586074">16</div>
<div class="a code" style="left:341.0px;top:428.9px"><span style="color:#abb2bf">        nunito_sans</span><span style="color:#56b6c2">:</span><span style="color:#abb2bf"> </span><span style="color:#da70d6">[</span><span style="color:#98c379">&#x27;var(--font-nunito_sans)&#x27;</span><span style="color:#da70d6">]</span><span style="color:#abb2bf">,</span></div>
<div class="a ln" style="left:271.5px;top:450.5px;color:#586074">17</div>
<div class="a code" style="left:341.0px;top:450.4px"><span style="color:#abb2bf">        poppins</span><span style="color:#56b6c2">:</span><span style="color:#abb2bf"> </span><span style="color:#da70d6">[</span><span style="color:#98c379">&#x27;var(--font-poppins)&#x27;</span><span style="color:#da70d6">]</span><span style="color:#abb2bf">,</span></div>
<div class="a ln" style="left:271.5px;top:472.0px;color:#586074">18</div>
<div class="a code" style="left:341.0px;top:471.9px"><span style="color:#abb2bf">      </span><span style="color:#ffd700">}</span><span style="color:#abb2bf">,</span></div>
<div class="a ln" style="left:271.5px;top:493.5px;color:#c8ccd4">19</div>
<div class="a code" style="left:341.0px;top:493.4px"><span style="color:#abb2bf">    </span><span style="color:#179fff">}</span><span style="color:#abb2bf">,</span></div>
<div class="a ln" style="left:271.5px;top:515.0px;color:#586074">20</div>
<div class="a code" style="left:341.0px;top:514.9000000000001px"><span style="color:#abb2bf">  </span><span style="color:#da70d6">}</span><span style="color:#abb2bf">,</span></div>
<div class="a ln" style="left:271.5px;top:536.5px;color:#586074">21</div>
<div class="a code" style="left:341.0px;top:536.4000000000001px"><span style="color:#abb2bf">  plugins</span><span style="color:#56b6c2">:</span><span style="color:#abb2bf"> </span><span style="color:#da70d6">[]</span><span style="color:#abb2bf">,</span></div>
<div class="a ln" style="left:271.5px;top:558.0px;color:#586074">22</div>
<div class="a code" style="left:341.0px;top:557.9000000000001px"><span style="color:#ffd700">}</span><span style="color:#abb2bf">;</span></div>
<div class="a ln" style="left:271.5px;top:579.5px;color:#586074">23</div>
<div class="a code" style="left:341.0px;top:579.4000000000001px"></div>
<div class="a" style="left:340.4px;top:144.1px;width:2.5px;height:2.5px;border-radius:1px;background:#b8bec8"></div>
<div class="a" style="left:345.09999999999997px;top:144.1px;width:2.5px;height:2.5px;border-radius:1px;background:#b8bec8"></div>
<div class="a" style="left:349.79999999999995px;top:144.1px;width:2.5px;height:2.5px;border-radius:1px;background:#b8bec8"></div>
<svg style="left:344px;top:491.7px" width="14" height="17" viewBox="0 0 14 17"><circle cx="6.65" cy="5.5" r="5.5" fill="#ffcc00"/><path d="M3.2 8.5h6.9l-1 2.2v3.8c0 .6-.5 1-1 1H5.2c-.6 0-1-.4-1-1v-3.8z" fill="#ffcc00"/><rect x="5.9" y="11.6" width="1.6" height="2.1" fill="#2c313c"/></svg>
</body></html>
